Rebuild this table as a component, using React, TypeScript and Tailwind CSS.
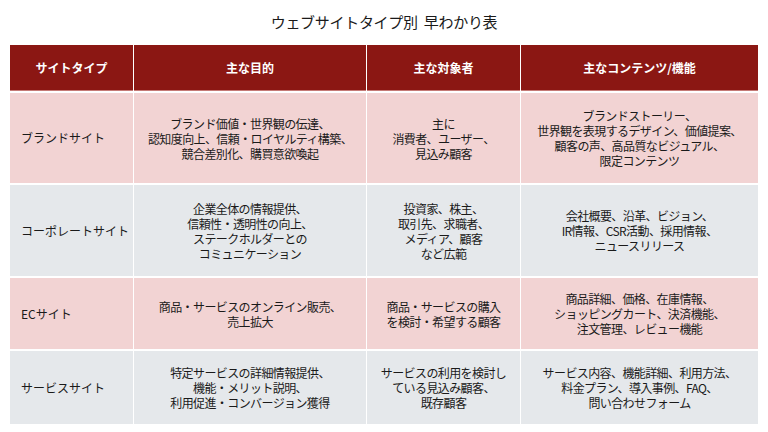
import { Fragment } from "react";

const HEAD = ["サイトタイプ", "主な目的", "主な対象者", "主なコンテンツ/機能"];

type Row = { type: string; cells: string[][]; tone: "pink" | "gray"; h: string };

const ROWS: Row[] = [
  {
    type: "ブランドサイト",
    tone: "pink",
    h: "h-[90px]",
    cells: [
      ["ブランド価値・世界観の伝達、", "認知度向上、信頼・ロイヤルティ構築、", "競合差別化、購買意欲喚起"],
      ["主に", "消費者、ユーザー、", "見込み顧客"],
      ["ブランドストーリー、", "世界観を表現するデザイン、価値提案、", "顧客の声、高品質なビジュアル、", "限定コンテンツ"],
    ],
  },
  {
    type: "コーポレートサイト",
    tone: "gray",
    h: "h-[91px]",
    cells: [
      ["企業全体の情報提供、", "信頼性・透明性の向上、", "ステークホルダーとの", "コミュニケーション"],
      ["投資家、株主、", "取引先、求職者、", "メディア、顧客", "など広範"],
      ["会社概要、沿革、ビジョン、", "IR情報、CSR活動、採用情報、", "ニュースリリース"],
    ],
  },
  {
    type: "ECサイト",
    tone: "pink",
    h: "h-[71px]",
    cells: [
      ["商品・サービスのオンライン販売、", "売上拡大"],
      ["商品・サービスの購入", "を検討・希望する顧客"],
      ["商品詳細、価格、在庫情報、", "ショッピングカート、決済機能、", "注文管理、レビュー機能"],
    ],
  },
  {
    type: "サービスサイト",
    tone: "gray",
    h: "h-[73px]",
    cells: [
      ["特定サービスの詳細情報提供、", "機能・メリット説明、", "利用促進・コンバージョン獲得"],
      ["サービスの利用を検討し", "ている見込み顧客、", "既存顧客"],
      ["サービス内容、機能詳細、利用方法、", "料金プラン、導入事例、FAQ、", "問い合わせフォーム"],
    ],
  },
];

export default function App() {
  return (
    <div
      className="w-[768px] h-[432px] bg-white text-[#1a1a1a] overflow-hidden"
      style={{ fontFamily: '"Noto Sans CJK JP", "Noto Sans", sans-serif' }}
    >
      <h1 className="pt-[12px] h-[45px] text-center text-[15px] leading-[20px] tracking-[-0.3px]">
        ウェブサイトタイプ別&nbsp;&nbsp;早わかり表
      </h1>
      <div className="ml-[10px] w-[748px] grid grid-cols-[123px_232px_153px_237px] gap-x-[1px] gap-y-[2px] bg-white">
        {HEAD.map((h) => (
          <div
            key={h}
            className="h-[46px] bg-[#8b1713] text-white font-bold text-[12px] flex items-center justify-center shadow-[inset_0_-1px_0_#c47a76]"
          >
            {h}
          </div>
        ))}
        {ROWS.map((row) => {
          const bg = row.tone === "pink" ? "bg-[#f2d3d3]" : "bg-[#e5e8eb]";
          return (
            <Fragment key={row.type}>
              <div className={`${row.h} ${bg} flex items-center pl-[11px] text-[12px]`}>
                {row.type}
              </div>
              {row.cells.map((lines, i) => (
                <div key={i} className={`${row.h} ${bg} flex items-center justify-center`}>
                  <p className="text-center text-[12px] leading-[15px] tracking-[-0.6px] whitespace-nowrap">
                    {lines.map((l, j) => (
                      <Fragment key={j}>
                        {j > 0 && <br />}
                        {l}
                      </Fragment>
                    ))}
                  </p>
                </div>
              ))}
            </Fragment>
          );
        })}
      </div>
    </div>
  );
}
